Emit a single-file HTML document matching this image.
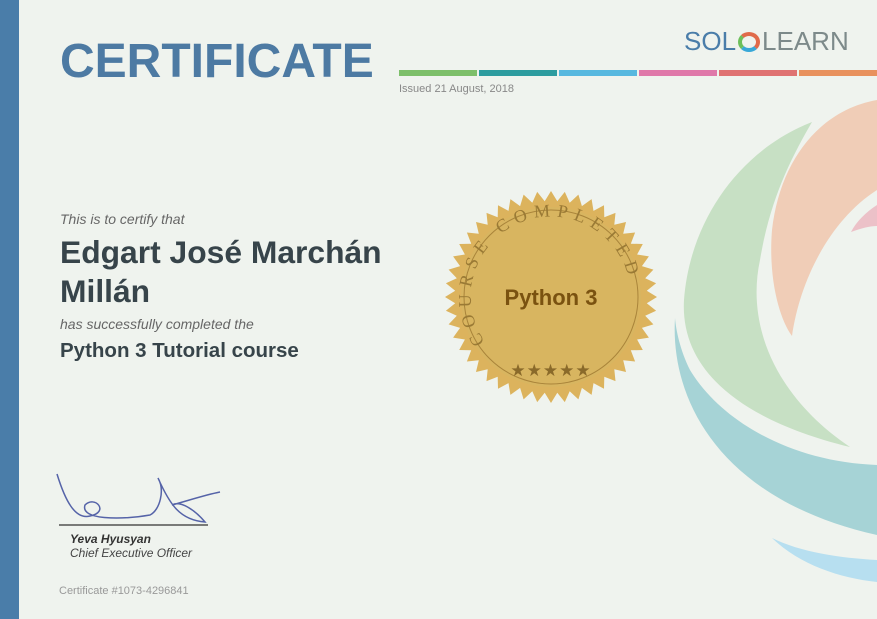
<!DOCTYPE html>
<html><head><meta charset="utf-8"><style>
body{margin:0;width:877px;height:619px;background:#eff3ee;position:relative;overflow:hidden;font-family:"Liberation Sans",Arial,sans-serif}
.bar{position:absolute;left:0;top:0;width:19px;height:619px;background:#4a7da9}
.t{position:absolute;white-space:nowrap}
</style></head><body>
<svg width="877" height="619" style="position:absolute;left:0;top:0">
<path d="M877,100 C820,110 780,160 772,230 C768,280 780,320 792,336 C800,280 830,220 877,190 Z" fill="#f0cdb7"/>
<path d="M877,205 C866,212 856,222 851,232 C862,228 870,226 877,226 Z" fill="#ecc1c8"/>
<path d="M812,122 C740,150 690,220 684,300 C680,370 740,420 850,447 C780,400 745,330 760,260 C770,200 790,160 812,122 Z" fill="#c7e0c4"/>
<path d="M675,318 C670,400 720,500 877,535 L877,465 C790,462 720,420 690,370 C680,350 676,330 675,318 Z" fill="#a6d3d6"/>
<path d="M772,538 C800,565 840,578 877,582 L877,560 C840,558 800,552 772,538 Z" fill="#b7dff0"/>
<rect x="399" y="70" width="78" height="6" fill="#7dbf6a"/>
<rect x="479" y="70" width="78" height="6" fill="#2d9c9f"/>
<rect x="559" y="70" width="78" height="6" fill="#57b8df"/>
<rect x="639" y="70" width="78" height="6" fill="#df78a9"/>
<rect x="719" y="70" width="78" height="6" fill="#df7272"/>
<rect x="799" y="70" width="78" height="6" fill="#e8915d"/>
<g transform="translate(551,297)">
<polygon fill="#dcb35d" points="" id="teeth"/>
<circle r="90" fill="#d8b560"/>
<circle r="87" fill="none" stroke="#a9843a" stroke-width="1"/>
<defs><path id="arc" d="M-66,45 A80,80 0 1 1 70,38"/></defs>
<text font-family="Liberation Serif,serif" font-size="18" fill="#9a7a35" letter-spacing="6.3"><textPath href="#arc">COURSE COMPLETED</textPath></text>
<text y="8" text-anchor="middle" font-size="22" font-weight="bold" fill="#7a5210">Python 3</text>
<text y="79" text-anchor="middle" font-size="17" fill="#8a6a2a" letter-spacing="1">★★★★★</text>
</g>
<path d="M57,474 C65,500 75,520 90,516 C110,512 95,495 85,505 C80,520 120,520 150,515 C160,510 165,490 158,478 C170,505 180,520 205,522 C195,510 180,500 172,505 C190,500 205,495 220,492" fill="none" stroke="#5563a8" stroke-width="1.5"/>
<line x1="59" y1="525" x2="208" y2="525" stroke="#333" stroke-width="1.2"/>
</svg>
<script>
var p=[],n=48;for(var i=0;i<n*2;i++){var a=i*Math.PI/n,r=i%2?96:106;p.push((r*Math.cos(a)).toFixed(1)+","+(r*Math.sin(a)).toFixed(1));}
document.getElementById('teeth').setAttribute('points',p.join(' '));
</script>
<div class="bar"></div>
<div class="t" style="left:60px;top:34px;font-size:48px;font-weight:bold;color:#4d7aa3">CERTIFICATE</div>
<div class="t" style="left:684px;top:26px;font-size:26px;color:#4a7da9">SOL<span style="display:inline-block;width:22px;height:20px;border-radius:50%;border:4px solid #e06a4a;border-left-color:#6cbf5a;border-bottom-color:#38a8d8;box-sizing:border-box;vertical-align:-2px;margin:0 2px"></span><span style="color:#7d8a8a">LEARN</span></div>
<div class="t" style="left:399px;top:83px;font-size:11px;color:#888">Issued 21 August, 2018</div>
<div class="t" style="left:60px;top:211px;font-size:14px;font-style:italic;color:#666">This is to certify that</div>
<div class="t" style="left:60px;top:233px;font-size:31.8px;font-weight:bold;color:#37444a;line-height:39px">Edgart José Marchán<br>Millán</div>
<div class="t" style="left:60px;top:316px;font-size:14px;font-style:italic;color:#666">has successfully completed the</div>
<div class="t" style="left:60px;top:339px;font-size:20.5px;font-weight:bold;color:#37444a">Python 3 Tutorial course</div>
<div class="t" style="left:70px;top:532px;font-size:12px;font-weight:bold;font-style:italic;color:#333">Yeva Hyusyan</div>
<div class="t" style="left:70px;top:546px;font-size:12px;font-style:italic;color:#444">Chief Executive Officer</div>
<div class="t" style="left:59px;top:585px;font-size:11px;color:#999">Certificate #1073-4296841</div>
</body></html>
